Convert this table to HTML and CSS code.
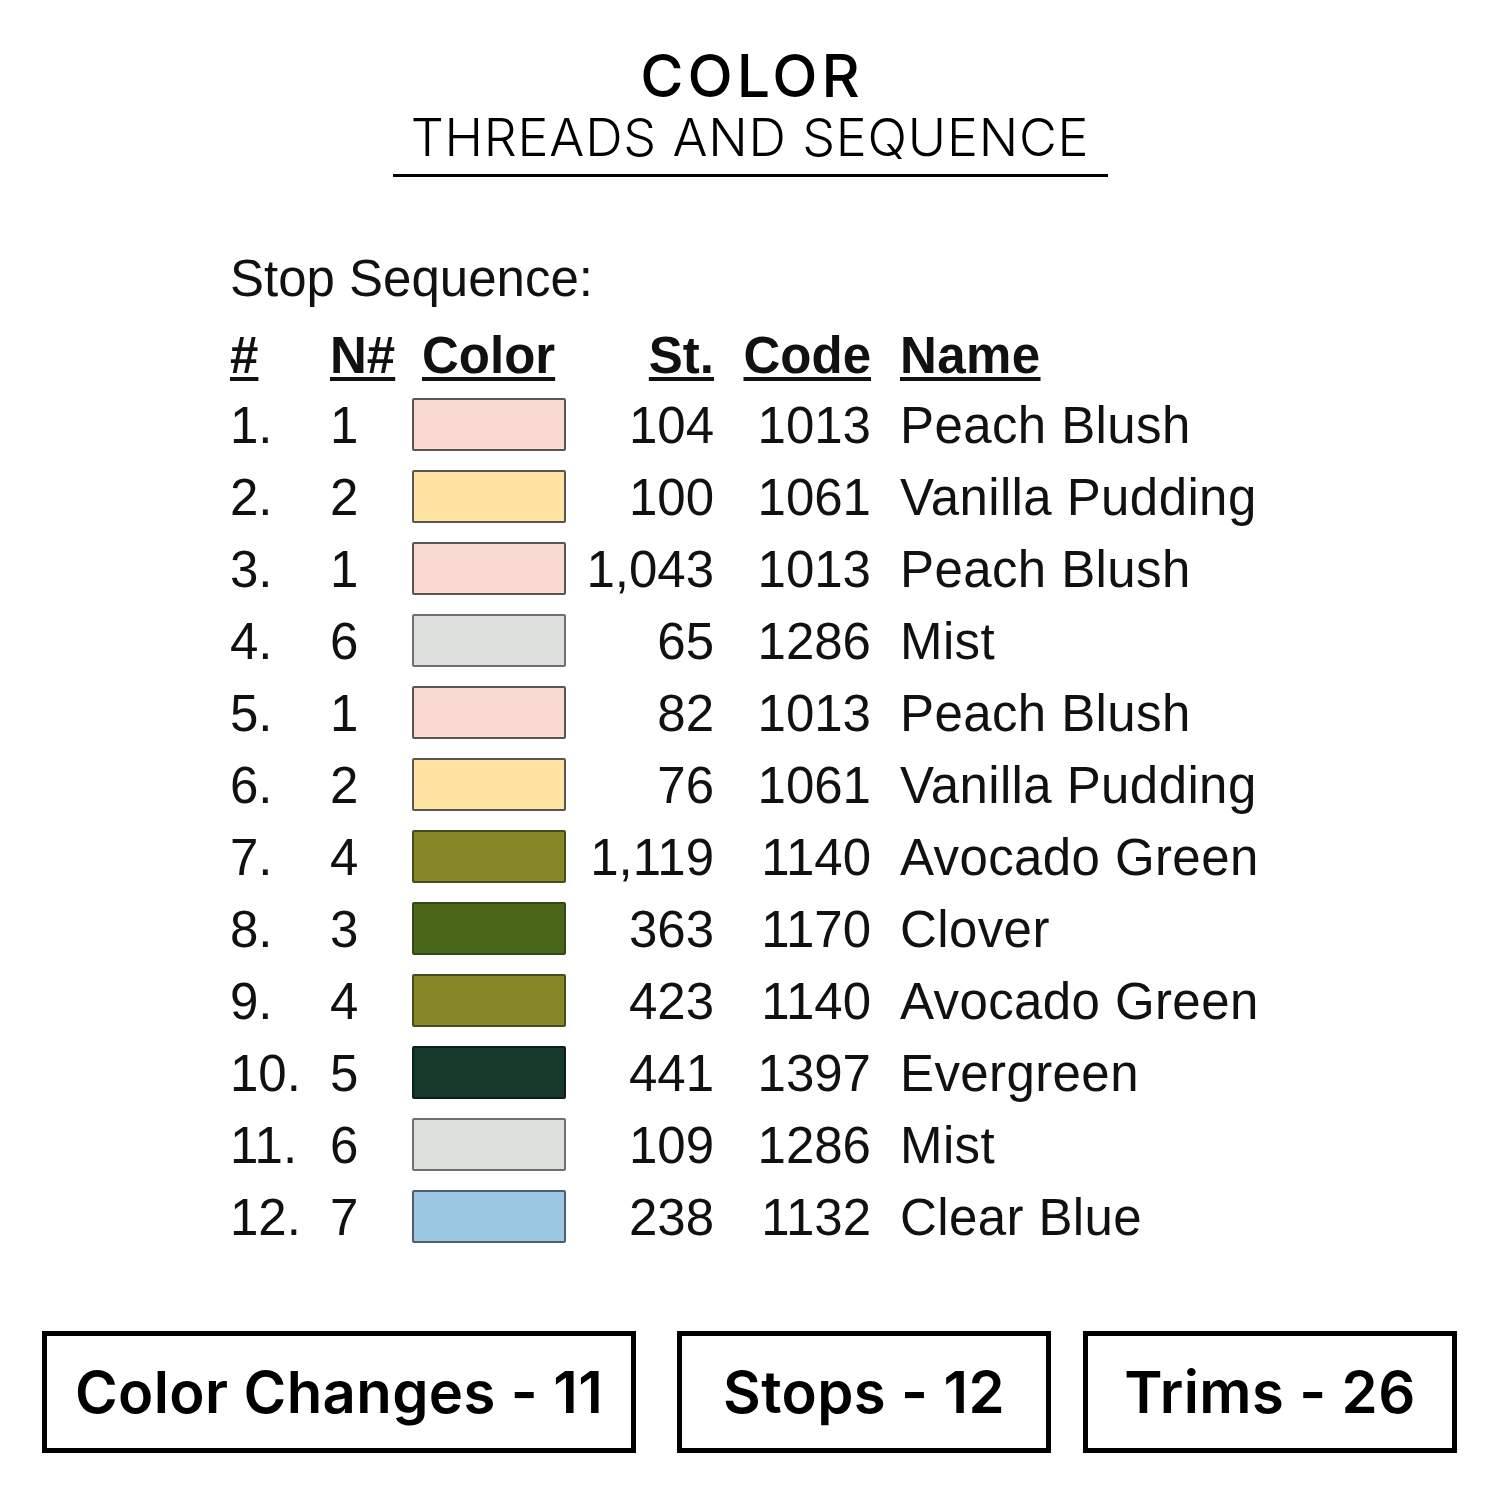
FILE: index.html
```html
<!DOCTYPE html>
<html>
<head>
<meta charset="utf-8">
<link rel="stylesheet" href="styles.css">
</head>
<body>
<div class="page">
  <header class="head">
    <div class="title">COLOR</div>
    <div class="subtitle">THREADS AND SEQUENCE</div>
    <div class="rule"></div>
  </header>

  <section class="seq">
    <div class="seq-title">Stop Sequence:</div>
    <div class="grid">
      <div class="h">#</div><div class="h">N#</div><div class="h h-color">Color</div><div class="h r">St.</div><div class="h r">Code</div><div class="h name">Name</div>

      <div>1.</div><div>1</div><div class="sw peach"></div><div class="r">104</div><div class="r">1013</div><div class="name">Peach Blush</div>
      <div>2.</div><div>2</div><div class="sw vanilla"></div><div class="r">100</div><div class="r">1061</div><div class="name">Vanilla Pudding</div>
      <div>3.</div><div>1</div><div class="sw peach"></div><div class="r">1,043</div><div class="r">1013</div><div class="name">Peach Blush</div>
      <div>4.</div><div>6</div><div class="sw mist"></div><div class="r">65</div><div class="r">1286</div><div class="name">Mist</div>
      <div>5.</div><div>1</div><div class="sw peach"></div><div class="r">82</div><div class="r">1013</div><div class="name">Peach Blush</div>
      <div>6.</div><div>2</div><div class="sw vanilla"></div><div class="r">76</div><div class="r">1061</div><div class="name">Vanilla Pudding</div>
      <div>7.</div><div>4</div><div class="sw avocado"></div><div class="r">1,119</div><div class="r">1140</div><div class="name">Avocado Green</div>
      <div>8.</div><div>3</div><div class="sw clover"></div><div class="r">363</div><div class="r">1170</div><div class="name">Clover</div>
      <div>9.</div><div>4</div><div class="sw avocado"></div><div class="r">423</div><div class="r">1140</div><div class="name">Avocado Green</div>
      <div>10.</div><div>5</div><div class="sw evergreen"></div><div class="r">441</div><div class="r">1397</div><div class="name">Evergreen</div>
      <div>11.</div><div>6</div><div class="sw mist"></div><div class="r">109</div><div class="r">1286</div><div class="name">Mist</div>
      <div>12.</div><div>7</div><div class="sw blue"></div><div class="r">238</div><div class="r">1132</div><div class="name">Clear Blue</div>
    </div>
  </section>

  <section class="stats">
    <div class="box box-wide">Color Changes - 11</div>
    <div class="box box-mid">Stops - 12</div>
    <div class="box box-last">Trims - 26</div>
  </section>
</div>
</body>
</html>
```

FILE: styles.css
```css
html, body {
  margin: 0;
  padding: 0;
  background: #ffffff;
}

.page {
  width: 1500px;
  height: 1500px;
  color: #000;
}

.head {
  display: flex;
  flex-direction: column;
  align-items: center;
  padding-top: 47px;
  font-family: Inter, "Noto Sans", sans-serif;
}

.title {
  font-size: 59px;
  line-height: 58px;
  font-weight: 500;
  letter-spacing: 4px;
  margin-left: 4px;
}

.subtitle {
  margin-top: 7px;
  font-size: 52px;
  line-height: 52px;
  font-weight: 300;
  letter-spacing: 0.8px;
}

.rule {
  margin-top: 10px;
  width: 715px;
  height: 3px;
  background: #000;
}

.seq {
  margin-top: 72px;
  padding-left: 230px;
  font-family: "Liberation Sans", Arial, sans-serif;
  font-size: 51px;
  color: #111;
}

.seq-title {
  line-height: 60px;
}

.grid {
  margin-top: 13px;
  display: grid;
  grid-template-columns: 100px 82px 154px 148px 157px auto;
  grid-template-rows: 68px;
  grid-auto-rows: 72px;
  align-items: center;
  line-height: 72px;
}

.h {
  font-weight: bold;
  text-decoration: underline;
  text-decoration-thickness: 4px;
  text-underline-offset: 4px;
  line-height: 68px;
  justify-self: start;
}

.h.r {
  justify-self: end;
}

.h-color {
  margin-left: 10px;
}

.r {
  text-align: right;
}

.name {
  padding-left: 29px;
  white-space: nowrap;
  letter-spacing: 0.4px;
}

.sw {
  height: 49px;
  border: 2px solid #5a5550;
  border-radius: 2px;
  margin-bottom: 4px;
}

.peach { background: #f8dad2; }
.vanilla { background: #fee3a2; }
.mist { background: #dcdedb; border-color: #6e6e6e; }
.avocado { background: #868828; border-color: #4a4a20; }
.clover { background: #4a6618; border-color: #334818; }
.evergreen { background: #15392b; border-color: #0c1f18; }
.blue { background: #9cc7e2; border-color: #4e6070; }

.stats {
  margin-top: 77px;
  display: flex;
  padding-left: 42px;
  font-family: Inter, "Noto Sans", sans-serif;
  font-weight: 600;
  font-size: 58px;
  letter-spacing: 0.4px;
}

.box {
  box-sizing: border-box;
  height: 122px;
  border: 5px solid #000;
  display: flex;
  align-items: center;
  justify-content: center;
}

.box-wide { width: 594px; }
.box-mid { width: 374px; margin-left: 41px; }
.box-last { width: 374px; margin-left: 32px; }
```
